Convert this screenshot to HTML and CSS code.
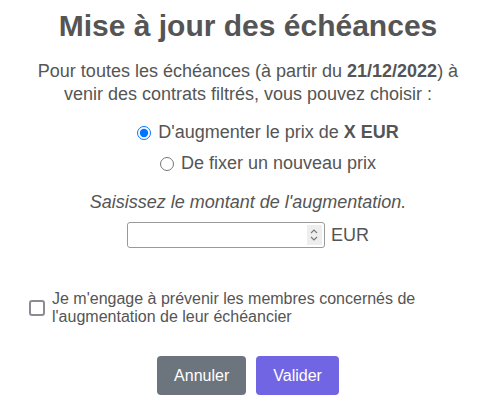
FILE: index.html
```html
<!DOCTYPE html>
<html lang="fr">
<head>
  <meta charset="UTF-8">
  <title>Mise à jour des échéances</title>
  <link rel="stylesheet" href="styles.css">
</head>
<body>

  <div class="modal">
    <h1>Mise à jour des échéances</h1>

    <p class="intro">
      Pour toutes les échéances (à partir du <strong>21/12/2022</strong>) à<br>
      venir des contrats filtrés, vous pouvez choisir :
    </p>

    <!-- choix du mode -->
    <div class="choices">
      <label class="choice">
        <input type="radio" name="mode" checked>
        <span>D'augmenter le prix de <strong>X EUR</strong></span>
      </label>
      <label class="choice">
        <input type="radio" name="mode">
        <span>De fixer un nouveau prix</span>
      </label>
    </div>

    <p class="hint">Saisissez le montant de l'augmentation.</p>

    <div class="amount">
      <div class="field">
        <input type="text" class="field-input">
        <span class="spinner">
          <svg width="10" height="16" viewBox="0 0 10 16">
            <path d="M2 6 L5 3 L8 6" fill="none" stroke="#777" stroke-width="1.1"/>
            <path d="M2 10 L5 13 L8 10" fill="none" stroke="#777" stroke-width="1.1"/>
          </svg>
        </span>
      </div>
      <span class="unit">EUR</span>
    </div>

    <label class="engage">
      <input type="checkbox">
      <span>Je m'engage à prévenir les membres concernés de<br>l'augmentation de leur échéancier</span>
    </label>

    <div class="actions">
      <button type="button" class="btn btn-cancel">Annuler</button>
      <button type="button" class="btn btn-ok">Valider</button>
    </div>
  </div>

</body>
</html>
```

FILE: styles.css
```css
body {
  margin: 0;
  font-family: "Liberation Sans", Arial, sans-serif;
  color: #555;
  background: #fff;
}

.modal {
  width: 476px;
  padding: 8px 0 0 10px;
  text-align: center;
}

h1 {
  margin: 0;
  font-size: 30px;
  line-height: 36px;
  font-weight: bold;
}

.intro {
  margin: 16px 0 0;
  font-size: 18px;
  line-height: 23px;
}

.choices {
  margin-top: 16px;
  padding-left: 40px;
  display: flex;
  flex-direction: column;
  align-items: center;
  gap: 10px;
}

.choice {
  display: flex;
  align-items: center;
  gap: 5px;
  font-size: 18px;
  line-height: 21px;
}

.choice input {
  margin: 0 2px 0 0;
  width: 14px;
  height: 14px;
}

.hint {
  margin: 18px 0 0;
  font-size: 18px;
  font-style: italic;
  line-height: 21px;
}

.amount {
  margin-top: 9px;
  display: flex;
  justify-content: center;
  align-items: center;
  gap: 6px;
}

.field {
  display: flex;
  align-items: center;
  width: 196px;
  height: 24px;
  border: 1px solid #999;
  border-radius: 3px;
}

.field-input {
  flex: 1;
  min-width: 0;
  border: none;
  outline: none;
  height: 22px;
  padding: 0 4px;
  font: inherit;
}

.spinner {
  display: flex;
  align-items: center;
  justify-content: center;
  width: 15px;
  height: 20px;
  margin-right: 2px;
  background: #eee;
}

.unit {
  font-size: 18px;
}

.engage {
  margin: 42px 0 0 19px;
  display: flex;
  align-items: center;
  gap: 7px;
  text-align: left;
  font-size: 16px;
  line-height: 18px;
}

.engage input {
  appearance: none;
  margin: 0;
  width: 16px;
  height: 16px;
  flex: none;
  border: 2px solid #8b8b94;
  border-radius: 3px;
  background: #fff;
}

.actions {
  margin-top: 30px;
  display: flex;
  justify-content: center;
  gap: 10px;
}

.btn {
  height: 39px;
  padding: 0 17px;
  border: none;
  border-radius: 4px;
  color: #fff;
  font-family: inherit;
  font-size: 16px;
}

.btn-cancel {
  background: #6c757d;
}

.btn-ok {
  background: #7165e3;
}
```
